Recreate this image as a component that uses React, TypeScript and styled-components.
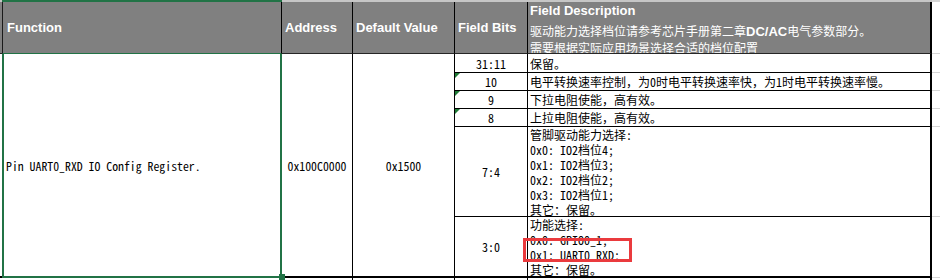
import React from 'react';
import styled, { createGlobalStyle, css } from 'styled-components';

const GlobalStyle = createGlobalStyle`
  html, body { margin: 0; padding: 0; background: #ffffff; overflow: hidden; }
  body { font-family: "Liberation Sans", Arial, sans-serif; }
`;

const GREEN = '#217346';
const HEAD_GREY = '#808080';
const EDGE_GREY = '#c6c6c6';
const LIGHT_GRID = '#d6d6d6';
const BODY_FONT = '"Noto Sans Mono CJK SC", "Noto Sans CJK SC", "DejaVu Sans Mono", monospace';

const Sheet = styled.div`
  display: grid;
  grid-template-columns: 2px 280px 71px 102px 73px 404px 1fr;
  grid-template-rows: 2px 52px 19px 18px 18px 18px 90px 61px 1fr;
  width: 940px;
  height: 280px;
  background: #ffffff;
`;

const TopEdge = styled.div<{ $selected?: boolean; $light?: boolean }>`
  background: ${(p) => (p.$selected ? GREEN : p.$light ? LIGHT_GRID : EDGE_GREY)};
`;

const HeadCell = styled.div<{ $selected?: boolean; $thick?: boolean; $blank?: boolean; $stub?: boolean }>`
  box-sizing: border-box;
  display: flex;
  align-items: center;
  padding: 0 3px;
  background: ${(p) => (p.$blank ? '#ffffff' : HEAD_GREY)};
  color: #ffffff;
  font-family: "Liberation Sans", Arial, sans-serif;
  font-weight: bold;
  font-size: 13px;
  white-space: nowrap;
  overflow: hidden;
  border-bottom: 1px solid ${(p) => (p.$blank ? LIGHT_GRID : p.$selected ? GREEN : '#262626')};
  ${(p) =>
    p.$stub
      ? css`padding: 0;`
      : !p.$blank &&
        css`border-right: ${p.$thick ? '2px' : '1px'} solid #000000;`}
  ${(p) =>
    p.$selected &&
    css`
      border-left: 1px solid #1a1a1a;
      padding-left: 4px;
    `}
`;

const DescHead = styled(HeadCell)`
  display: block;
  padding: 0 0 0 2px;
`;

const DescTitle = styled.div`
  height: 18px;
  line-height: 18px;
`;

const DescNote = styled.div`
  margin-top: 3px;
  font-family: "Noto Sans CJK SC", "Liberation Sans", sans-serif;
  font-weight: normal;
  font-size: 12px;
  line-height: 16px;
  white-space: nowrap;
`;

const Bold = styled.b`
  font-family: "Liberation Sans", Arial, sans-serif;
  font-weight: bold;
  font-size: 13px;
`;

const Stub = styled.div`
  grid-row: span 6;
  border-bottom: 2px solid #000000;
`;

const FunctionCell = styled.div`
  position: relative;
  grid-row: span 6;
  box-sizing: border-box;
  display: flex;
  align-items: center;
  padding-left: 2px;
  border-left: 2px solid ${GREEN};
  border-right: 2px solid ${GREEN};
  border-bottom: 2px solid ${GREEN};
  font-family: ${BODY_FONT};
  font-size: 11.8px;
  color: #000000;
  white-space: nowrap;
`;

const FillHandle = styled.span`
  position: absolute;
  right: -5px;
  bottom: -4px;
  width: 6px;
  height: 6px;
  background: ${GREEN};
`;

const ValueCell = styled.div`
  grid-row: span 6;
  box-sizing: border-box;
  display: flex;
  align-items: center;
  justify-content: center;
  border-right: 1px solid #000000;
  border-bottom: 2px solid #000000;
  font-family: ${BODY_FONT};
  font-size: 11.8px;
  color: #000000;
  white-space: nowrap;
`;

const BitsCell = styled.div<{ $last?: boolean; $mark?: boolean }>`
  position: relative;
  box-sizing: border-box;
  display: flex;
  align-items: center;
  justify-content: center;
  border-right: 1px solid #000000;
  border-bottom: ${(p) => (p.$last ? '2px' : '1px')} solid #000000;
  font-family: ${BODY_FONT};
  font-size: 12px;
  color: #000000;
  ${(p) =>
    p.$mark &&
    css`
      &::before {
        content: '';
        position: absolute;
        left: 0;
        top: 0;
        width: 0;
        height: 0;
        border-top: 5px solid #1f7a36;
        border-right: 5px solid transparent;
      }
    `}
`;

const DescCell = styled.div<{ $last?: boolean; $multi?: boolean }>`
  position: relative;
  box-sizing: border-box;
  display: flex;
  flex-direction: column;
  justify-content: ${(p) => (p.$multi ? 'flex-start' : 'center')};
  padding-left: 2px;
  border-right: 2px solid #000000;
  border-bottom: ${(p) => (p.$last ? '2px' : '1px')} solid #000000;
  font-family: ${BODY_FONT};
  font-size: 12px;
  color: #000000;
  white-space: nowrap;
`;

const DescLine = styled.div`
  height: 15px;
  line-height: 15px;
`;

const Callout = styled.span`
  position: absolute;
  left: -5px;
  top: 21px;
  width: 109px;
  height: 24px;
  box-sizing: border-box;
  border: 3px solid #ea3a3d;
  pointer-events: none;
`;

const SpareCell = styled.div`
  border-bottom: 1px solid ${LIGHT_GRID};
`;

const TailCell = styled.div<{ $line?: 'thin' | 'thick' | 'none' }>`
  box-sizing: border-box;
  border-right: ${(p) => (p.$line === 'thick' ? '2px solid #000000' : p.$line === 'thin' ? '1px solid #000000' : 'none')};
`;

type Field = { bits: string; lines: string[]; mark?: boolean; callout?: boolean };

const fields: Field[] = [
  { bits: '31:11', lines: ['保留。'] },
  { bits: '10', lines: ['电平转换速率控制，为0时电平转换速率快，为1时电平转换速率慢。'], mark: true },
  { bits: '9', lines: ['下拉电阻使能，高有效。'], mark: true },
  { bits: '8', lines: ['上拉电阻使能，高有效。'], mark: true },
  {
    bits: '7:4',
    lines: ['管脚驱动能力选择:', '0x0: IO2档位4;', '0x1: IO2档位3;', '0x2: IO2档位2;', '0x3: IO2档位1;', '其它：保留。'],
  },
  {
    bits: '3:0',
    lines: ['功能选择:', '0x0: GPIO0_1;', '0x1: UART0_RXD;', '其它：保留。'],
    callout: true,
  },
];

export default function App() {
  return (
    <>
      <GlobalStyle />
      <Sheet>
        <TopEdge />
        <TopEdge $selected />
        <TopEdge />
        <TopEdge />
        <TopEdge />
        <TopEdge />
        <TopEdge $light />

        <HeadCell $stub />
        <HeadCell $selected>Function</HeadCell>
        <HeadCell>Address</HeadCell>
        <HeadCell>Default Value</HeadCell>
        <HeadCell>Field Bits</HeadCell>
        <DescHead $thick>
          <DescTitle>Field Description</DescTitle>
          <DescNote>
            驱动能力选择档位请参考芯片手册第二章<Bold>DC/AC</Bold>电气参数部分。
            <br />
            需要根据实际应用场景选择合适的档位配置
          </DescNote>
        </DescHead>
        <HeadCell $blank />

        <Stub />
        <FunctionCell>
          Pin UART0_RXD IO Config Register.
          <FillHandle />
        </FunctionCell>
        <ValueCell>0x100C0000</ValueCell>
        <ValueCell>0x1500</ValueCell>
        {fields.map((f, i) => {
          const last = i === fields.length - 1;
          return (
            <React.Fragment key={f.bits}>
              <BitsCell $last={last} $mark={f.mark}>
                {f.bits}
              </BitsCell>
              <DescCell $last={last} $multi={f.lines.length > 1}>
                {f.lines.map((l) => (
                  <DescLine key={l}>{l}</DescLine>
                ))}
                {f.callout && <Callout />}
              </DescCell>
              <SpareCell />
            </React.Fragment>
          );
        })}

        <TailCell $line="none" />
        <TailCell $line="thin" />
        <TailCell $line="thin" />
        <TailCell $line="thin" />
        <TailCell $line="thin" />
        <TailCell $line="thick" />
        <TailCell $line="none" />
      </Sheet>
    </>
  );
}
